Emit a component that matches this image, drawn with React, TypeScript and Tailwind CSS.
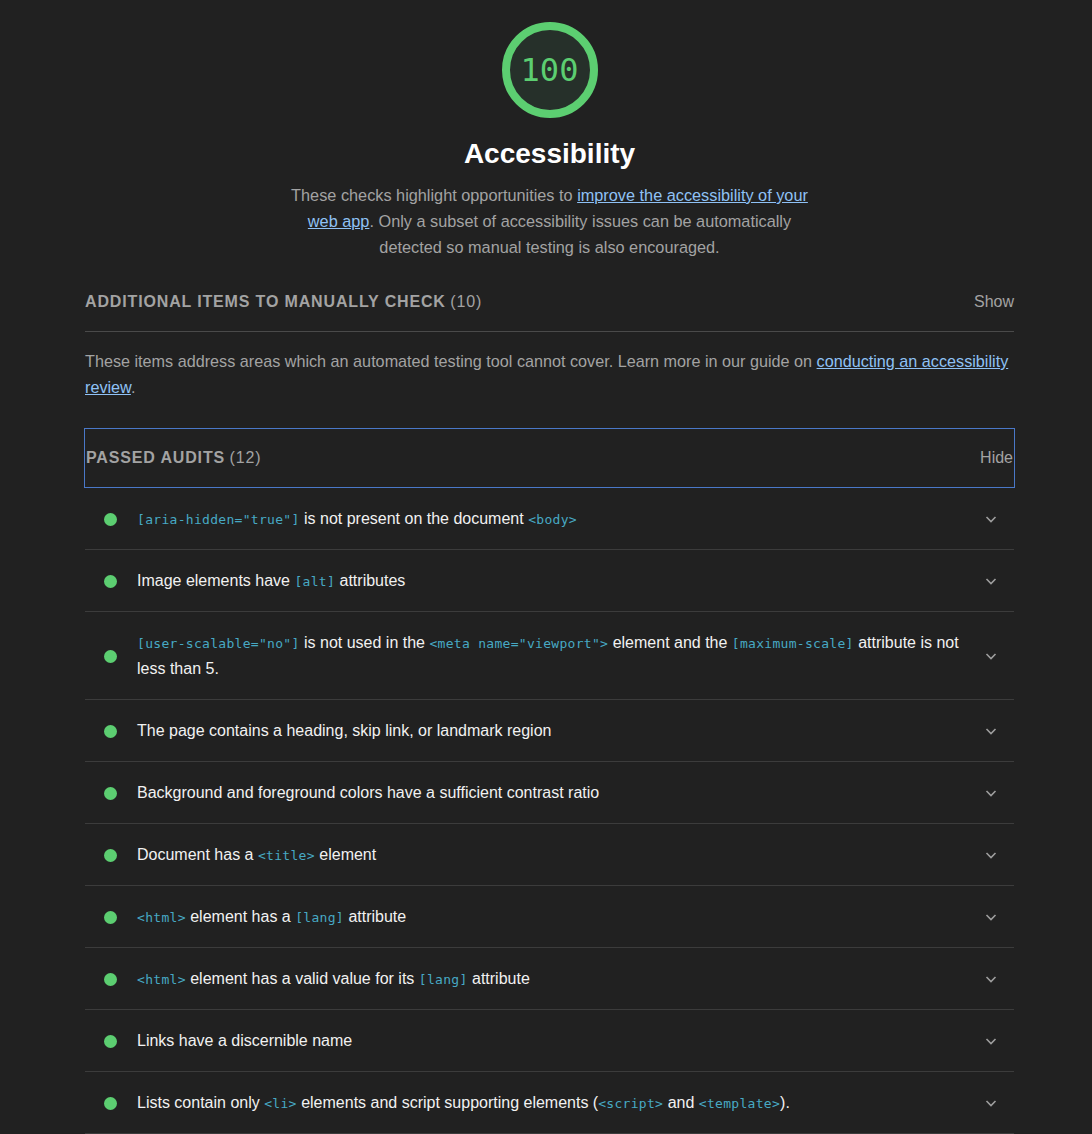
import React from "react";

type Part = string | { code: string };

const audits: Part[][] = [
  [{ code: '[aria-hidden="true"]' }, " is not present on the document ", { code: "<body>" }],
  ["Image elements have ", { code: "[alt]" }, " attributes"],
  [
    { code: '[user-scalable="no"]' },
    " is not used in the ",
    { code: '<meta name="viewport">' },
    " element and the ",
    { code: "[maximum-scale]" },
    " attribute is not less than 5.",
  ],
  ["The page contains a heading, skip link, or landmark region"],
  ["Background and foreground colors have a sufficient contrast ratio"],
  ["Document has a ", { code: "<title>" }, " element"],
  [{ code: "<html>" }, " element has a ", { code: "[lang]" }, " attribute"],
  [{ code: "<html>" }, " element has a valid value for its ", { code: "[lang]" }, " attribute"],
  ["Links have a discernible name"],
  [
    "Lists contain only ",
    { code: "<li>" },
    " elements and script supporting elements (",
    { code: "<script>" },
    " and ",
    { code: "<template>" },
    ").",
  ],
];

const Chevron = () => (
  <svg width="14" height="14" viewBox="0 0 14 14" fill="none" className="shrink-0">
    <path d="M2.5 5 L7 9.5 L11.5 5" stroke="#9e9e9e" strokeWidth="1.6" />
  </svg>
);

const AuditRow = ({ parts }: { parts: Part[] }) => (
  <div className="flex items-center border-b border-[#3c3c3c] pt-[18px] pb-[17px] pl-[19px] pr-[16px]">
    <span className="mr-[20px] h-[13px] w-[13px] shrink-0 rounded-full bg-[#5cce71]" />
    <div className="flex-1 pr-6 text-[16px] leading-[26px] text-[#f1f1f1]">
      {parts.map((p, i) =>
        typeof p === "string" ? (
          <span key={i}>{p}</span>
        ) : (
          <code
            key={i}
            className="font-['DejaVu_Sans_Mono',monospace] text-[13px] leading-none tracking-[0.3px] text-[#47a9c4]"
          >
            {p.code}
          </code>
        )
      )}
    </div>
    <Chevron />
  </div>
);

export default function App() {
  return (
    <div className="min-h-[1134px] bg-[#212121] font-['Liberation_Sans',Arial,sans-serif]">
      <div className="ml-[85px] w-[929px] pt-[22px]">
        {/* Gauge */}
        <div className="flex flex-col items-center">
          <div className="flex h-[96px] w-[96px] items-center justify-center rounded-full border-[8px] border-[#5cce71] bg-[#26302a]">
            <span className="font-['DejaVu_Sans_Mono',monospace] text-[32px] leading-none text-[#5cce71]">100</span>
          </div>
          <h1 className="mt-[18px] text-[28px] font-bold leading-[36px] text-white">Accessibility</h1>
          <p className="mt-[10px] w-[545px] text-center text-[16.3px] leading-[26px] text-[#a3a3a3]">
            These checks highlight opportunities to{" "}
            <a className="text-[#8fc1f5] underline">improve the accessibility of your web app</a>. Only a subset of
            accessibility issues can be automatically detected so manual testing is also encouraged.
          </p>
        </div>

        {/* Manual checks */}
        <div className="mt-[11px] flex items-center justify-between border-b border-[#4a4a4a] pt-[19px] pb-[17px]">
          <div className="text-[16px] text-[#a3a3a3]">
            <span className="font-bold uppercase tracking-[0.85px]">Additional items to manually check</span>{" "}
            <span className="tracking-[0.85px]">(10)</span>
          </div>
          <span className="text-[16px] text-[#a3a3a3]">Show</span>
        </div>
        <p className="pt-[16px] text-[16.2px] leading-[26px] text-[#a3a3a3]">
          These items address areas which an automated testing tool cannot cover. Learn more in our guide on{" "}
          <a className="text-[#8fc1f5] underline">conducting an accessibility review</a>.
        </p>

        {/* Passed audits */}
        <div className="-mx-px mt-[28px] flex h-[60px] items-center justify-between border border-[#4a78c8] px-px">
          <div className="text-[16px] text-[#a3a3a3]">
            <span className="font-bold uppercase tracking-[0.85px]">Passed audits</span>{" "}
            <span className="tracking-[0.85px]">(12)</span>
          </div>
          <span className="text-[16px] text-[#a3a3a3]">Hide</span>
        </div>
        <div>
          {audits.map((a, i) => (
            <AuditRow key={i} parts={a} />
          ))}
        </div>
      </div>
    </div>
  );
}
